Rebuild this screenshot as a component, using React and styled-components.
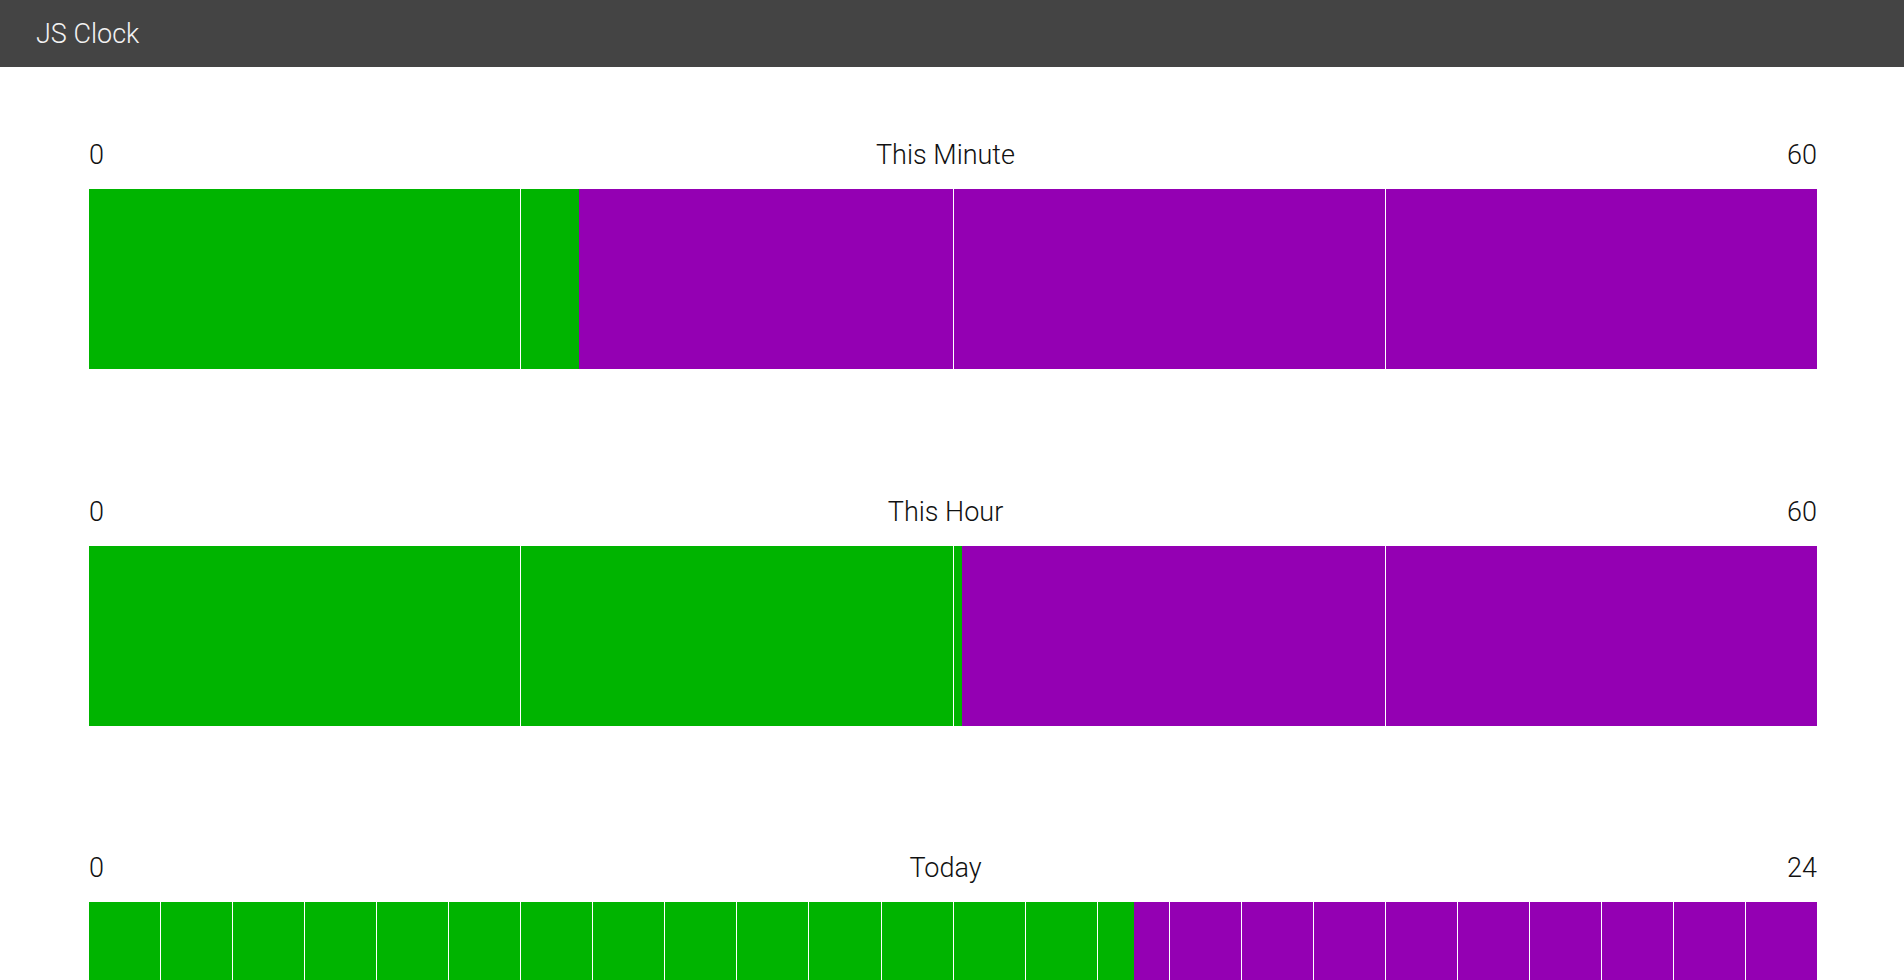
import React from 'react';
import styled, { createGlobalStyle } from 'styled-components';

const GlobalStyle = createGlobalStyle`
    body{
        margin : 0;
        background : #fff;
        font-family : Roboto, 'Liberation Sans', sans-serif;
        font-weight : 300;
        overflow : hidden;
    }
`;

const TopBar = styled.div`
    height : 67px;
    background-color : #444444;
    color : #f2f2f2;
    font-size : 27px;
    display : flex;
    align-items : center;
    padding-left : 36px;
`;

const Content = styled.div`
    display : flex;
    flex-direction : column;
    gap : 125.5px;
    padding : 71px 87px 0 89px;
`;

const Section = styled.div`
    display : flex;
    flex-direction : column;
`;

const LabelRow = styled.div`
    display : flex;
    justify-content : space-between;
    font-size : 27px;
    line-height : 35px;
    color : #111;
    margin-bottom : 16px;
`;

const Bar = styled.div`
    display : flex;
    height : 180px;
`;

const Segment = styled.div`
    flex : 1;
    box-sizing : border-box;
    background-color : #9400b3;
    border-right : 1px solid #fff;
    &:last-child{
        border-right : none;
    }
`;

const Fill = styled.div`
    height : 100%;
    background-color : #00b400;
`;

const now = { seconds : 17, minutes : 30 + 17 / 60, hours : 14 + 30 / 60 + 17 / 3600 };

const clocks = [
    { title : 'This Minute', max : 60, parts : 4, value : now.seconds },
    { title : 'This Hour', max : 60, parts : 4, value : now.minutes },
    { title : 'Today', max : 24, parts : 24, value : now.hours }
];

const ClockBar = ({ title, max, parts, value }) => {
    const filled = value / max * parts;
    return(
        <Section>
            <LabelRow>
                <span>0</span>
                <span>{title}</span>
                <span>{max}</span>
            </LabelRow>
            <Bar>
                {Array.from({ length : parts }, (_, i) => {
                    const part = Math.max(0, Math.min(1, filled - i));
                    return(
                        <Segment key = {i}>
                            <Fill style = {{ width : `${part * 100}%` }} />
                        </Segment>
                    );
                })}
            </Bar>
        </Section>
    );
};

const App = () => (
    <>
        <GlobalStyle />
        <TopBar>JS Clock</TopBar>
        <Content>
            {clocks.map(c => <ClockBar key = {c.title} {...c} />)}
        </Content>
    </>
);

export default App;
